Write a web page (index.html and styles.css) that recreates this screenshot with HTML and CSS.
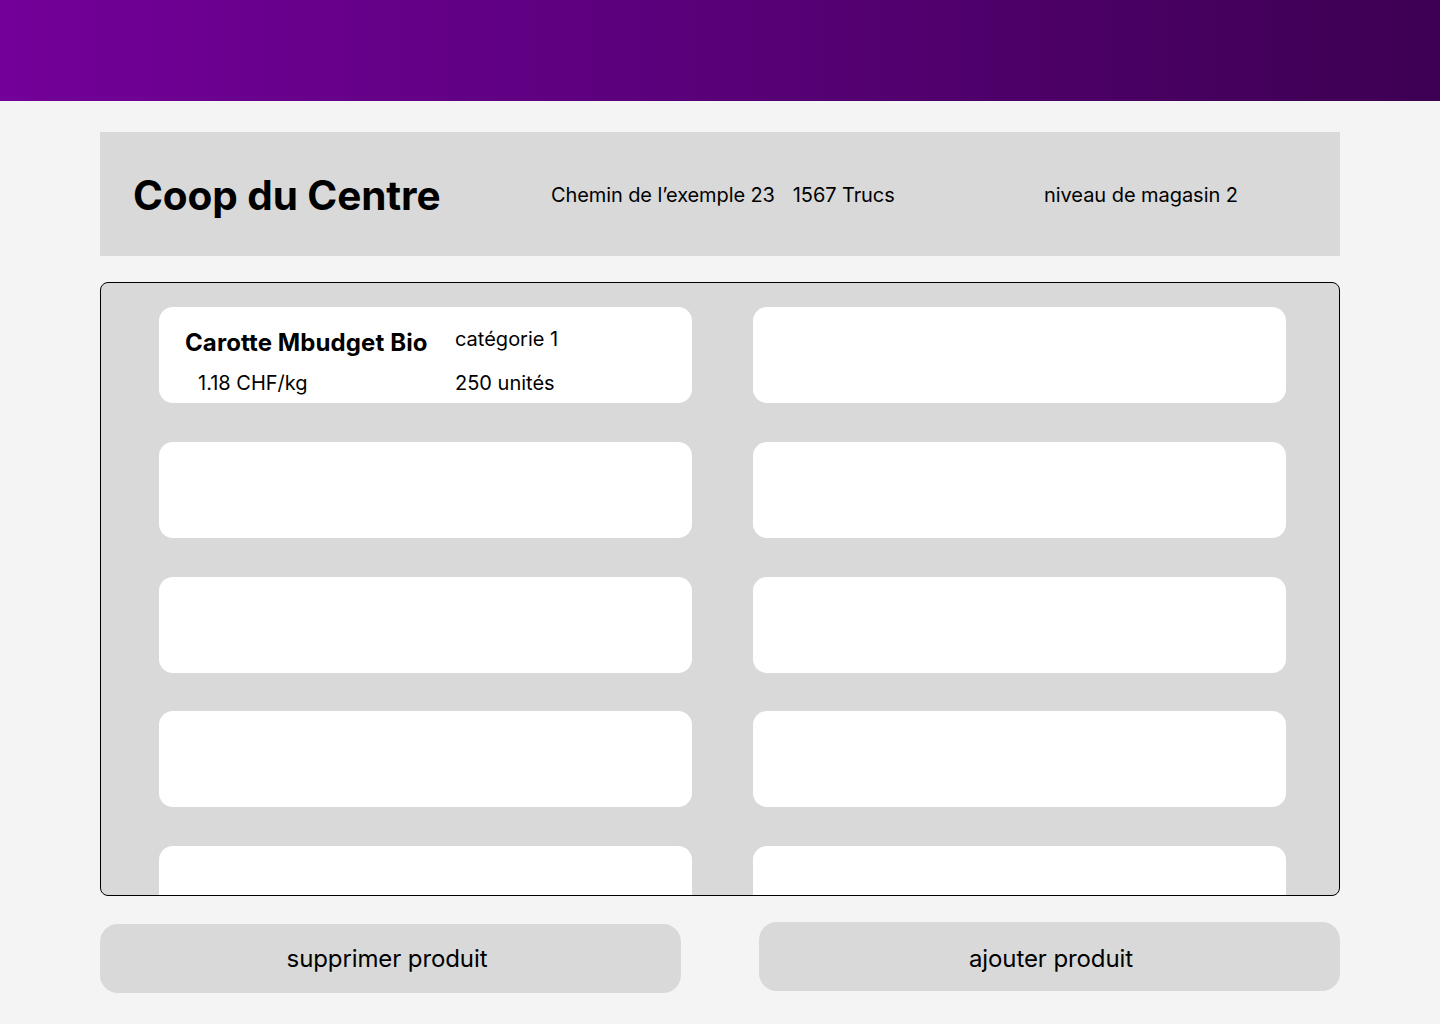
FILE: index.html
```html
<!DOCTYPE html>
<html lang="fr">
<head>
<meta charset="utf-8">
<title>Coop du Centre</title>
<link rel="stylesheet" href="styles.css">
</head>
<body>
<div class="topbar"></div>
<main class="main">
  <section class="store">
    <h1 class="store-name">Coop du Centre</h1>
    <div class="store-address"><span>Chemin de l’exemple 23</span><span>1567 Trucs</span></div>
    <div class="store-level">niveau de magasin 2</div>
  </section>
  <section class="products">
    <div class="grid">
      <div class="card">
        <div class="p-name">Carotte Mbudget Bio</div>
        <div class="p-cat">catégorie 1</div>
        <div class="p-price">1.18 CHF/kg</div>
        <div class="p-qty">250 unités</div>
      </div>
      <div class="card"></div>
      <div class="card"></div>
      <div class="card"></div>
      <div class="card"></div>
      <div class="card"></div>
      <div class="card"></div>
      <div class="card"></div>
      <div class="card"></div>
      <div class="card"></div>
    </div>
  </section>
  <div class="actions">
    <button class="btn btn-del">supprimer produit</button>
    <button class="btn btn-add">ajouter produit</button>
  </div>
</main>
</body>
</html>
```
FILE: styles.css
```css
* { box-sizing: border-box; }
html, body { margin: 0; padding: 0; }
body {
  background: #f4f4f4;
  font-family: Inter, "Noto Sans", sans-serif;
  color: #000;
  width: 1440px;
  height: 1024px;
  overflow: hidden;
}
.topbar {
  height: 101px;
  background: linear-gradient(90deg, #730099 0%, #5e0080 40%, #3d0052 100%);
}
.main {
  padding: 31px 100px 0;
}
.store {
  height: 124px;
  background: #d9d9d9;
  display: grid;
  grid-template-columns: 418px 493px 1fr;
  align-items: center;
  padding-left: 33px;
  padding-top: 2px;
}
.store-name {
  margin: 0;
  font-size: 40.5px;
  font-weight: 700;
  letter-spacing: -0.1px;
  line-height: 1;
  padding-top: 2px;
}
.store-address {
  display: flex;
  gap: 18px;
  font-size: 20px;
  letter-spacing: -0.1px;
}
.store-level {
  font-size: 20px;
  letter-spacing: -0.05px;
}
.products {
  margin-top: 26px;
  height: 614px;
  background: #d9d9d9;
  border: 1px solid #000;
  border-radius: 8px;
  overflow: hidden;
}
.grid {
  display: grid;
  grid-template-columns: 533px 533px;
  grid-auto-rows: 96px;
  column-gap: 61px;
  row-gap: 38.8px;
  padding: 24px 0 0 58px;
}
.card {
  background: #fff;
  border-radius: 14px;
  display: grid;
  grid-template-columns: 270px 1fr;
  grid-template-rows: 52px 44px;
  padding: 0 0 0 26px;
}
.p-name {
  font-size: 24px;
  font-weight: 700;
  letter-spacing: 0.1px;
  align-self: end;
  line-height: 1.2;
  padding-bottom: 1px;
}
.p-cat {
  font-size: 20px;
  align-self: end;
  padding-bottom: 8px;
  line-height: 1.2;
}
.p-price {
  font-size: 20px;
  padding-left: 13px;
  padding-top: 12px;
  line-height: 1.2;
}
.p-qty {
  font-size: 20px;
  padding-top: 12px;
  line-height: 1.2;
}
.actions {
  display: flex;
  justify-content: space-between;
  align-items: flex-start;
  margin-top: 26px;
}
.btn {
  width: 581px;
  height: 69px;
  border: none;
  background: #d9d9d9;
  border-radius: 18px;
  font-family: Inter, "Noto Sans", sans-serif;
  font-size: 24px;
  letter-spacing: -0.1px;
  color: #000;
  padding: 0;
}
.btn-del { margin-top: 2px; padding-right: 7px; }
.btn-add { padding-top: 3px; padding-left: 3px; }
```
